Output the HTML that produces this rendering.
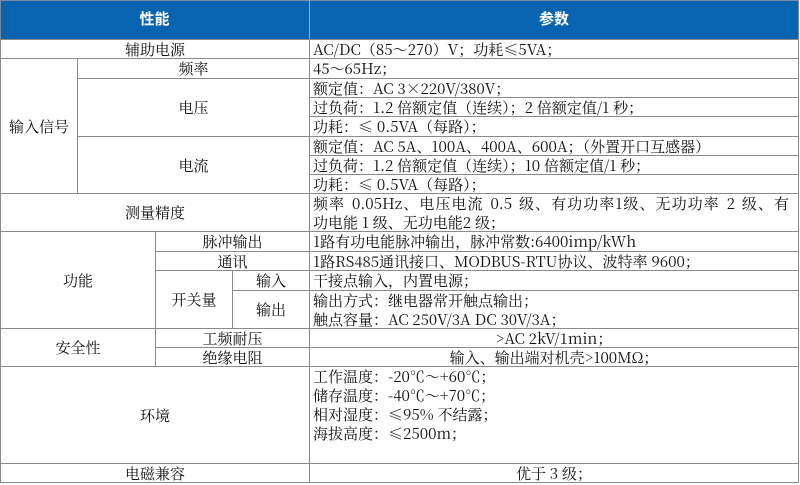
<!DOCTYPE html>
<html><head><meta charset="utf-8"><style>
body{margin:0;width:800px;height:485px;background:#fff;position:relative;overflow:hidden;font-family:"Noto Serif CJK SC","Liberation Serif",serif;font-size:15px;color:#111}
.c{position:absolute;box-sizing:border-box;border:1px solid #8a8a8a;display:flex;align-items:center;justify-content:center;line-height:19px;white-space:nowrap}
.r{justify-content:flex-start;padding-left:3px}
.t{align-items:flex-start;flex-direction:column;justify-content:flex-start;padding-top:0}
.hd{position:absolute;left:0;top:0;width:799px;height:40px;background:#0863b0;border:1px solid #7a8aa0;box-sizing:border-box}
.h{position:absolute;top:0;height:40px;line-height:40px;text-align:center;color:#fff;font-weight:bold;font-family:"Liberation Sans","Noto Sans CJK SC",sans-serif;font-size:15px}
</style></head><body>
<div class="hd"></div>
<div style="position:absolute;left:309px;top:0;width:1px;height:40px;background:#9ab"></div>
<div class="h" style="left:0;width:309px">性能</div>
<div class="h" style="left:309px;width:490px">参数</div>

<div class="c" style="left:0;top:39px;width:310px;height:20px">辅助电源</div>
<div class="c" style="left:0;top:58px;width:78px;height:136px">输入信号</div>
<div class="c" style="left:77px;top:58px;width:233px;height:21px">频率</div>
<div class="c" style="left:77px;top:78px;width:233px;height:59px">电压</div>
<div class="c" style="left:77px;top:136px;width:233px;height:58px">电流</div>
<div class="c" style="left:0;top:193px;width:310px;height:39px">测量精度</div>
<div class="c" style="left:0;top:231px;width:156px;height:98px">功能</div>
<div class="c" style="left:155px;top:231px;width:155px;height:21px">脉冲输出</div>
<div class="c" style="left:155px;top:251px;width:155px;height:20px">通讯</div>
<div class="c" style="left:155px;top:270px;width:78px;height:59px">开关量</div>
<div class="c" style="left:232px;top:270px;width:78px;height:21px">输入</div>
<div class="c" style="left:232px;top:290px;width:78px;height:39px">输出</div>
<div class="c" style="left:0;top:328px;width:156px;height:39px">安全性</div>
<div class="c" style="left:155px;top:328px;width:155px;height:20px">工频耐压</div>
<div class="c" style="left:155px;top:347px;width:155px;height:20px">绝缘电阻</div>
<div class="c" style="left:0;top:366px;width:310px;height:98px">环境</div>
<div class="c" style="left:0;top:463px;width:310px;height:20px">电磁兼容</div>

<div class="c r" style="left:309px;top:39px;width:490px;height:20px">AC/DC（85～270）V；功耗≤5VA；</div>
<div class="c r" style="left:309px;top:58px;width:490px;height:21px">45～65Hz；</div>
<div class="c r" style="left:309px;top:78px;width:490px;height:20px">额定值：AC 3×220V/380V；</div>
<div class="c r" style="left:309px;top:97px;width:490px;height:20px">过负荷：1.2 倍额定值（连续）；2 倍额定值/1 秒；</div>
<div class="c r" style="left:309px;top:116px;width:490px;height:21px">功耗：≤ 0.5VA（每路）；</div>
<div class="c r" style="left:309px;top:136px;width:490px;height:20px">额定值：AC 5A、100A、400A、600A；（外置开口互感器）</div>
<div class="c r" style="left:309px;top:155px;width:490px;height:20px">过负荷：1.2 倍额定值（连续）；10 倍额定值/1 秒；</div>
<div class="c r" style="left:309px;top:174px;width:490px;height:20px">功耗：≤ 0.5VA（每路）；</div>
<div class="c r t" style="left:309px;top:193px;width:490px;height:39px"><div style="width:476px;text-align:justify;text-align-last:justify;white-space:normal;word-spacing:2px">频率 0.05Hz、电压电流 0.5 级、有功功率1级、无功功率 2 级、有</div><div>功电能 1 级、无功电能2 级；</div></div>
<div class="c r" style="left:309px;top:231px;width:490px;height:21px">1路有功电能脉冲输出，脉冲常数:6400imp/kWh</div>
<div class="c r" style="left:309px;top:251px;width:490px;height:20px">1路RS485通讯接口、MODBUS-RTU协议、波特率 9600；</div>
<div class="c r" style="left:309px;top:270px;width:490px;height:21px">干接点输入，内置电源；</div>
<div class="c r t" style="left:309px;top:290px;width:490px;height:39px"><div>输出方式：继电器常开触点输出；</div><div>触点容量：AC 250V/3A DC 30V/3A；</div></div>
<div class="c" style="left:309px;top:328px;width:490px;height:20px">&gt;AC 2kV/1min；</div>
<div class="c" style="left:309px;top:347px;width:490px;height:20px">输入、输出端对机壳&gt;100MΩ；</div>
<div class="c r t" style="left:309px;top:366px;width:490px;height:98px"><div>工作温度：-20℃～+60℃；</div><div>储存温度：-40℃～+70℃；</div><div>相对湿度：≤95% 不结露；</div><div>海拔高度：≤2500m；</div></div>
<div class="c" style="left:309px;top:463px;width:490px;height:20px">优于 3 级；</div>
</body></html>
